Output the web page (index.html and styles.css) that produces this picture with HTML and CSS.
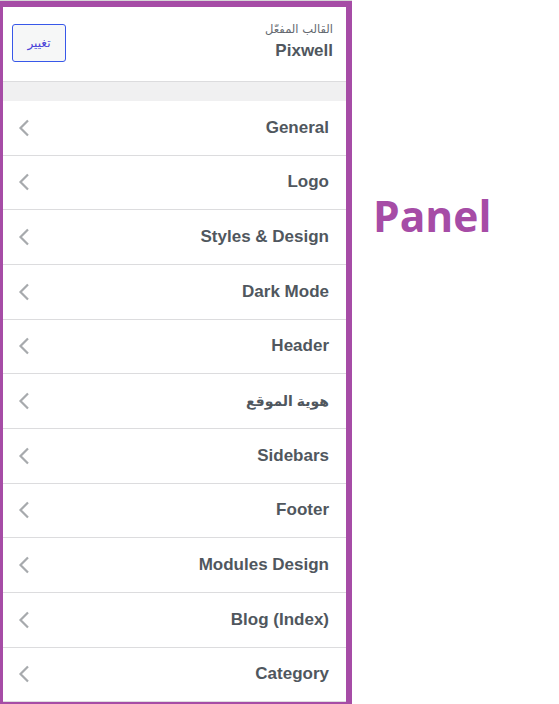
FILE: index.html
```html
<!DOCTYPE html>
<html lang="ar" dir="ltr">
<head>
<meta charset="utf-8">
<title>Panel</title>
<link rel="stylesheet" href="styles.css">
</head>
<body>
<div class="page">
  <div class="panel">
    <div class="panel-head">
      <button class="change-btn" type="button">تغيير</button>
      <div class="theme-info">
        <div class="theme-label">القالب المفعّل</div>
        <div class="theme-name">Pixwell</div>
      </div>
    </div>
    <div class="band"></div>
    <ul class="sections">
      <li class="section"><svg class="chev" viewBox="0 0 12 18" width="12" height="18"><polyline points="10,1.5 2.5,9 10,16.5"/></svg><span class="title">General</span></li>
      <li class="section"><svg class="chev" viewBox="0 0 12 18" width="12" height="18"><polyline points="10,1.5 2.5,9 10,16.5"/></svg><span class="title">Logo</span></li>
      <li class="section"><svg class="chev" viewBox="0 0 12 18" width="12" height="18"><polyline points="10,1.5 2.5,9 10,16.5"/></svg><span class="title">Styles &amp; Design</span></li>
      <li class="section"><svg class="chev" viewBox="0 0 12 18" width="12" height="18"><polyline points="10,1.5 2.5,9 10,16.5"/></svg><span class="title">Dark Mode</span></li>
      <li class="section"><svg class="chev" viewBox="0 0 12 18" width="12" height="18"><polyline points="10,1.5 2.5,9 10,16.5"/></svg><span class="title">Header</span></li>
      <li class="section"><svg class="chev" viewBox="0 0 12 18" width="12" height="18"><polyline points="10,1.5 2.5,9 10,16.5"/></svg><span class="title title-ar" dir="rtl">هوية الموقع</span></li>
      <li class="section"><svg class="chev" viewBox="0 0 12 18" width="12" height="18"><polyline points="10,1.5 2.5,9 10,16.5"/></svg><span class="title">Sidebars</span></li>
      <li class="section"><svg class="chev" viewBox="0 0 12 18" width="12" height="18"><polyline points="10,1.5 2.5,9 10,16.5"/></svg><span class="title">Footer</span></li>
      <li class="section"><svg class="chev" viewBox="0 0 12 18" width="12" height="18"><polyline points="10,1.5 2.5,9 10,16.5"/></svg><span class="title">Modules Design</span></li>
      <li class="section"><svg class="chev" viewBox="0 0 12 18" width="12" height="18"><polyline points="10,1.5 2.5,9 10,16.5"/></svg><span class="title">Blog (Index)</span></li>
      <li class="section"><svg class="chev" viewBox="0 0 12 18" width="12" height="18"><polyline points="10,1.5 2.5,9 10,16.5"/></svg><span class="title">Category</span></li>
    </ul>
  </div>
  <div class="label">Panel</div>
</div>
</body>
</html>
```

FILE: styles.css
```css
html, body {
  margin: 0;
  padding: 0;
  background: #ffffff;
}

body {
  font-family: "Liberation Sans", Arial, "DejaVu Sans", sans-serif;
  overflow: hidden;
}

.page {
  display: flex;
  align-items: flex-start;
}

.panel {
  width: 352px;
  height: 704px;
  box-sizing: border-box;
  border-top: 1px solid #d6d6d6;
  overflow: hidden;
  display: flex;
  flex-direction: column;
  background: #a64ca6;
  padding: 6px 6px 6px 3px;
}

.panel-head {
  background: #ffffff;
  height: 74px;
  flex: none;
  display: flex;
  align-items: flex-start;
  justify-content: space-between;
  padding: 0 13px 0 9px;
  border-bottom: 1px solid #dcdcde;
}

.change-btn {
  margin-top: 17px;
  width: 54px;
  height: 38px;
  border: 1px solid #3858e9;
  border-radius: 3px;
  background: #f6f7f7;
  color: #4b45d8;
  font-family: "Liberation Serif", "DejaVu Serif", "DejaVu Sans", serif;
  font-size: 12px;
  font-weight: 400;
  padding: 0;
}

.theme-info {
  text-align: right;
  margin-top: 13px;
}

.theme-label {
  line-height: 18px;
  color: #646970;
  font-family: "DejaVu Sans", sans-serif;
  font-size: 11.5px;
}

.theme-name {
  font-size: 17px;
  font-weight: 700;
  color: #50575e;
  line-height: 20px;
  margin-top: 3px;
}

.band {
  flex: none;
  height: 19px;
  background: #f0f0f1;
}

.sections {
  list-style: none;
  margin: 0;
  padding: 0;
  background: #ffffff;
  flex: 1;
}

.section {
  height: 54.67px;
  box-sizing: border-box;
  border-bottom: 1px solid #dcdcde;
  display: flex;
  align-items: center;
  justify-content: space-between;
  padding: 0 17px 0 15px;
}

.chev {
  flex: none;
  fill: none;
  stroke: #a7aaad;
  stroke-width: 2.2;
}

.title {
  font-size: 17px;
  font-weight: 700;
  color: #50575e;
}

.title-ar {
  font-size: 14px;
}

.label {
  margin-left: 21px;
  margin-top: 195px;
  font-family: "Open Sans", sans-serif;
  font-weight: 700;
  font-size: 42.5px;
  line-height: 1;
  color: #a64ca6;
}
```
